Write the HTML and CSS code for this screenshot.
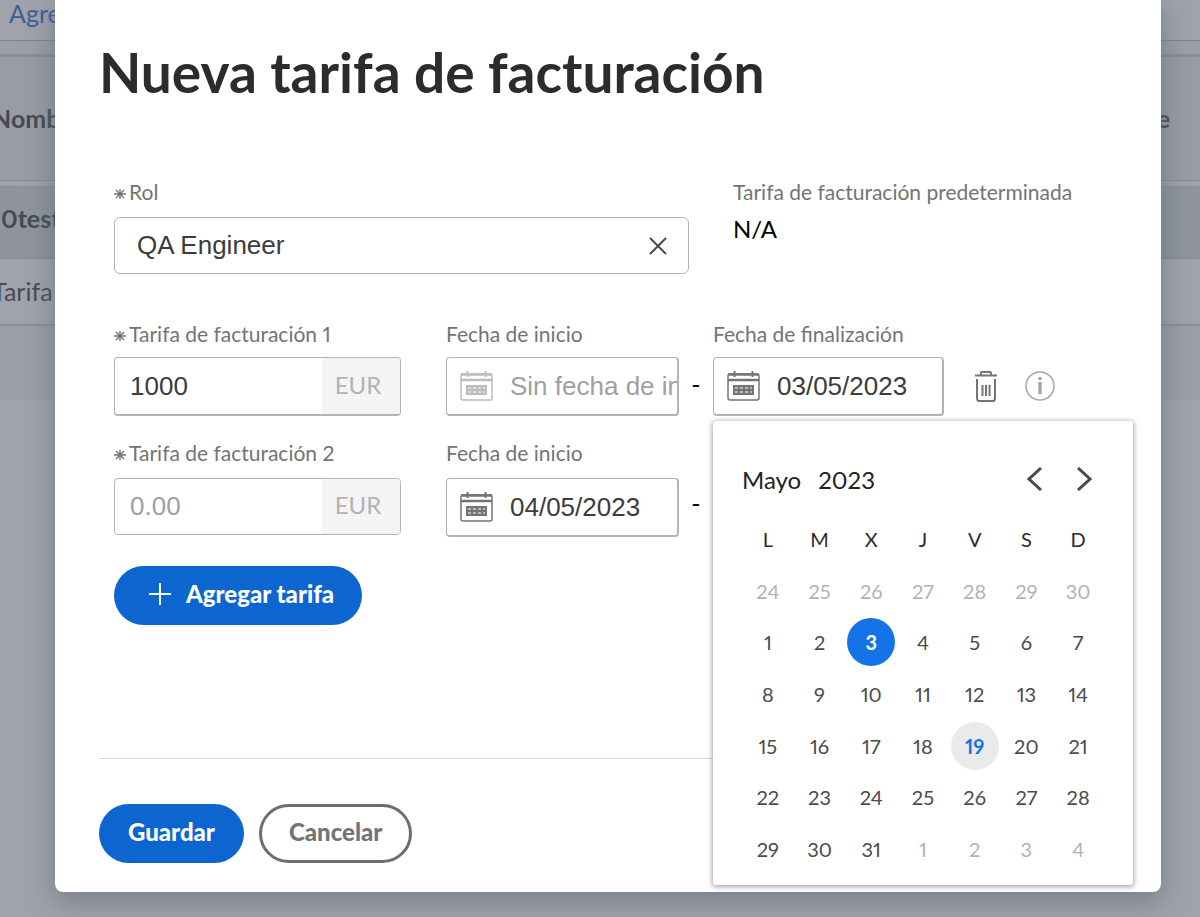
FILE: index.html
```html
<!DOCTYPE html>
<html lang="es">
<head>
<meta charset="utf-8">
<title>Nueva tarifa de facturación</title>
<link rel="stylesheet" href="styles.css">
</head>
<body>
<svg class="sprite" aria-hidden="true">
  <symbol id="calendar" viewBox="0 0 33 30">
    <rect x="1" y="3" width="31" height="26" rx="2" fill="none" stroke="currentColor" stroke-width="1.500"/>
    <path d="M1 3.500h31M1 9h31" stroke="currentColor" stroke-width="2.500"/>
    <path d="M7.500 0v6M25.500 0v6" stroke="currentColor" stroke-width="2"/>
    <path d="M6 14h21v10H6z" fill="currentColor"/>
    <path d="M8 16h3v2H8zM13 16h3v2h-3zM18 16h3v2h-3zM23 16h2v2h-2zM8 20h3v2H8zM13 20h3v2h-3zM18 20h3v2h-3zM23 20h2v2h-2z" fill="#fff" opacity=".5"/>
  </symbol>
  <symbol id="star" viewBox="0 0 12 12">
    <path d="M6 1v10M0 6h12M2 2l8 8M10 2l-8 8" stroke="currentColor" stroke-width="1.400"/>
  </symbol>
</svg>
<div class="screen">
  <main class="page" aria-hidden="true">
    <div class="toolbar">Agregar</div>
    <div class="grid-head"><span>Nombre</span><span class="last">e</span></div>
    <div class="grid-group">0test</div>
    <div class="grid-row">Tarifa</div>
    <div class="grid-rest"></div>
  </main>

  <form class="dialog" aria-labelledby="title">
    <h1 id="title">Nueva tarifa de facturación</h1>
    <div class="fields">
      <div class="row role-row">
        <div class="role">
          <label class="label" for="role"><svg class="star"><use href="#star"/></svg>Rol</label>
          <div class="control role-control">
            <input id="role" type="text" value="QA Engineer">
            <button type="button" class="clear" aria-label="Borrar"><svg viewBox="0 0 18 18"><path d="M1 1l16 16M17 1L1 17"/></svg></button>
          </div>
        </div>
        <div class="default-rate">
          <div class="label">Tarifa de facturación predeterminada</div>
          <div class="value">N/A</div>
        </div>
      </div>

      <div class="row first">
        <div class="rate">
          <label class="label" for="rate1"><svg class="star"><use href="#star"/></svg>Tarifa de facturación 1</label>
          <div class="control tall"><input id="rate1" type="text" value="1000"><span class="unit">EUR</span></div>
        </div>
        <div class="start">
          <label class="label" for="start1">Fecha de inicio</label>
          <div class="control tall date empty"><svg class="cal"><use href="#calendar"/></svg><input id="start1" type="text" placeholder="Sin fecha de inicio"></div>
        </div>
        <span class="dash">-</span>
        <div class="end">
          <label class="label" for="end1">Fecha de finalización</label>
          <div class="control tall date"><svg class="cal"><use href="#calendar"/></svg><input id="end1" type="text" value="03/05/2023"></div>
          <div class="popup">
            <div class="popup-head">
              <span>Mayo</span><span>2023</span>
              <button type="button" class="prev" aria-label="Mes anterior"><svg viewBox="0 0 16 24"><path d="M14 1L2 12l12 11"/></svg></button>
              <button type="button" aria-label="Mes siguiente"><svg viewBox="0 0 16 24"><path d="M2 1l12 11L2 23"/></svg></button>
            </div>
            <table class="month">
              <thead><tr><th>L</th><th>M</th><th>X</th><th>J</th><th>V</th><th>S</th><th>D</th></tr></thead>
              <tbody>
                <tr class="out"><td><button type="button">24</button></td><td><button type="button">25</button></td><td><button type="button">26</button></td><td><button type="button">27</button></td><td><button type="button">28</button></td><td><button type="button">29</button></td><td><button type="button">30</button></td></tr>
                <tr><td><button type="button">1</button></td><td><button type="button">2</button></td><td><button type="button" class="selected">3</button></td><td><button type="button">4</button></td><td><button type="button">5</button></td><td><button type="button">6</button></td><td><button type="button">7</button></td></tr>
                <tr><td><button type="button">8</button></td><td><button type="button">9</button></td><td><button type="button">10</button></td><td><button type="button">11</button></td><td><button type="button">12</button></td><td><button type="button">13</button></td><td><button type="button">14</button></td></tr>
                <tr><td><button type="button">15</button></td><td><button type="button">16</button></td><td><button type="button">17</button></td><td><button type="button">18</button></td><td><button type="button" class="today">19</button></td><td><button type="button">20</button></td><td><button type="button">21</button></td></tr>
                <tr><td><button type="button">22</button></td><td><button type="button">23</button></td><td><button type="button">24</button></td><td><button type="button">25</button></td><td><button type="button">26</button></td><td><button type="button">27</button></td><td><button type="button">28</button></td></tr>
                <tr><td><button type="button">29</button></td><td><button type="button">30</button></td><td><button type="button">31</button></td><td class="out"><button type="button">1</button></td><td class="out"><button type="button">2</button></td><td class="out"><button type="button">3</button></td><td class="out"><button type="button">4</button></td></tr>
              </tbody>
            </table>
          </div>
        </div>
        <div class="actions">
          <button type="button" aria-label="Eliminar"><svg class="trash" viewBox="0 0 24 31"><path d="M1 4.500h22M7 4V2q0-1 1-1h8q1 0 1 1v2M3 8v19q0 3 2 3h14q2 0 2-3V8" stroke-width="2"/><path d="M8.500 14v11M12 14v11M15.500 14v11" stroke-width="2"/></svg></button>
          <button type="button" aria-label="Información"><svg class="info" viewBox="0 0 30 30"><circle cx="15" cy="15" r="14" stroke-width="1.500"/><path d="M15 6v3M15 11v12" stroke-width="3.500"/></svg></button>
        </div>
      </div>

      <div class="row second">
        <div class="rate">
          <label class="label" for="rate2"><svg class="star"><use href="#star"/></svg>Tarifa de facturación 2</label>
          <div class="control"><input id="rate2" type="text" placeholder="0.00"><span class="unit">EUR</span></div>
        </div>
        <div class="start">
          <label class="label" for="start2">Fecha de inicio</label>
          <div class="control tall date"><svg class="cal"><use href="#calendar"/></svg><input id="start2" type="text" value="04/05/2023"></div>
        </div>
        <span class="dash">-</span>
        <div class="end"></div>
        <div class="actions"></div>
      </div>

      <button type="button" class="btn primary add"><svg viewBox="0 0 22 22"><path d="M11 0v22M0 11h22"/></svg>Agregar tarifa</button>
    </div>
    <div class="footer">
      <button type="submit" class="btn primary">Guardar</button>
      <button type="button" class="btn outline">Cancelar</button>
    </div>
  </form>
</div>
</body>
</html>
```

FILE: styles.css
```css
* { box-sizing: border-box; }
body { margin: 0; background: #a0a3ab; font-family: Lato, "Noto Sans", sans-serif; font-variant-numeric: proportional-nums; color: #2c2c2c; }
button { border: 0; padding: 0; background: none; font: inherit; color: inherit; cursor: pointer; }
svg { display: block; fill: none; stroke: currentColor; flex: none; }
.sprite { position: absolute; width: 0; height: 0; }
.sprite symbol { stroke: none; }
.screen { display: grid; min-height: 100vh; overflow: hidden; }
.page, .dialog { grid-area: 1 / 1; }

.page { font-size: 25px; color: #454a55; overflow: hidden; }
.toolbar { height: 54px; padding-left: 9px; line-height: 26px; color: #3b5f94; background: linear-gradient(#a0a3ab 40px, #7d828b 40px, #7d828b 41px, #9b9fa7 41px); }
.grid-head { display: flex; justify-content: space-between; height: 127px; border-top: 3px solid #8a8e96; border-bottom: 1px solid #888c94; background: #999ca4; line-height: 123px; font-weight: 700; }
.grid-head span:first-child { margin-left: -8px; }
.grid-head .last { margin-right: 30px; }
.grid-group { margin-top: 5px; height: 73px; border-top: 1px solid #888c94; border-bottom: 2px solid #8a8e96; background: #90949c; line-height: 63px; font-weight: 700; padding-left: 1px; }
.grid-row { height: 67px; border-bottom: 2px solid #8b8f97; line-height: 64px; margin-left: -8px; }
.grid-rest { height: 74px; background: #9c9fa7; }

.dialog { align-self: start; z-index: 1; margin: 0 39px 25px 55px; padding: 38px 44px 29px; background: #fff; border-radius: 0 0 8px 8px; box-shadow: 0 8px 28px 2px rgba(90, 104, 120, .6); }
h1 { margin: 0; font-size: 55px; line-height: 68px; font-weight: 700; }
.fields { padding: 72px 15px 0; }
.row { display: flex; }
.role { flex: 575 1 0; margin-right: 44px; }
.default-rate { flex: 369 1 0; }
.value { font-size: 24px; line-height: 24px; color: #000; }
.rate { flex: 287 1 0; margin-right: 45px; min-width: 0; }
.start { flex: 233 1 0; min-width: 0; }
.end { flex: 231 1 0; min-width: 0; position: relative; }
.actions { flex: 128 1 0; margin-left: 30px; display: flex; gap: 27px; padding-top: 51px; align-items: start; }
.dash { width: 34px; padding-top: 51px; text-align: center; font-size: 25px; line-height: 27px; color: #000; }
.first { margin-top: 46px; }
.second { margin-top: 23px; }

.label { display: flex; align-items: center; height: 27px; margin-bottom: 12px; font-size: 21px; color: #747474; white-space: nowrap; }
.first .label { margin-bottom: 10px; }
.star { width: 12px; height: 12px; margin: 4px 3px 0 0; }
.control { display: flex; align-items: stretch; height: 57px; border: 1px solid #b3b3b3; border-radius: 4px; overflow: hidden; background: #fff; }
.control.tall { height: 59px; border-bottom-width: 2px; }
.control input { flex: 1; min-width: 0; width: 0; border: 0; outline: 0; padding: 0 0 0 15px; background: none; font: 26px "Liberation Sans", Arial, sans-serif; color: #3c3c3c; }
.control input::placeholder { color: #a0a0a0; opacity: 1; }
.role-control { border-radius: 6px; }
.role-control input { padding-left: 22px; }
.clear { width: 60px; display: grid; place-items: center; color: #4b4b4b; }
.clear svg { width: 18px; height: 18px; stroke-width: 2; }
.unit { width: 78px; background: #f4f4f4; color: #b3b3b3; font-size: 24px; display: grid; place-items: center; padding: 0 6px 4px 0; }
.date { align-items: center; padding-left: 13px; color: #747474; border-right-width: 2px; }
.date.empty { color: #bcbcbc; }
.date input { align-self: stretch; padding-left: 17px; }
.cal { width: 33px; height: 30px; stroke: none; }
.trash { width: 24px; height: 31px; color: #747474; }
.info { width: 30px; height: 30px; color: #a8a8a8; }

.btn { display: inline-flex; align-items: center; justify-content: center; height: 59px; border-radius: 30px; font-size: 24px; font-weight: 900; }
.primary { background: #0d66d0; color: #fff; padding: 0 29px 4px; }
.outline { border: 3px solid #6e6e6e; color: #747474; padding: 0 27px 4px; }
.add { margin-top: 29px; padding: 0 28px 4px 35px; gap: 15px; }
.add svg { width: 22px; height: 22px; stroke-width: 2; }
.footer { display: flex; gap: 15px; margin-top: 133px; padding-top: 45px; border-top: 1px solid #dcdcdc; }

.popup { position: absolute; z-index: 2; left: 0; top: 100%; margin-top: 5px; width: 420px; padding: 30px 29px 10px; background: #fff; border-radius: 3px; box-shadow: 0 1px 5px 1px rgba(0, 0, 0, .35); }
.popup-head { display: flex; align-items: center; gap: 17px; height: 56px; margin-bottom: 6px; padding-right: 4px; font-size: 24px; color: #222; }
.popup-head button { width: 32px; height: 40px; display: grid; place-items: center; color: #4b4b4b; }
.popup-head .prev { margin-left: auto; }
.popup-head svg { width: 16px; height: 24px; stroke-width: 3; }
.month { width: 100%; height: 362px; table-layout: fixed; border-collapse: collapse; font-size: 20px; }
.month th { height: 52px; padding: 0; font-weight: 400; }
.month td { height: 51px; padding: 0; text-align: center; color: #4b4b4b; line-height: 48px; }
.month td button { display: block; margin: 0 auto; width: 48px; height: 48px; border-radius: 50%; }
.month .out td, .month td.out { color: #b3b3b3; }
.month .selected { background: #1473e6; color: #fff; font-weight: 700; }
.month .today { background: #eaeaea; color: #1473e6; font-weight: 700; }
```
